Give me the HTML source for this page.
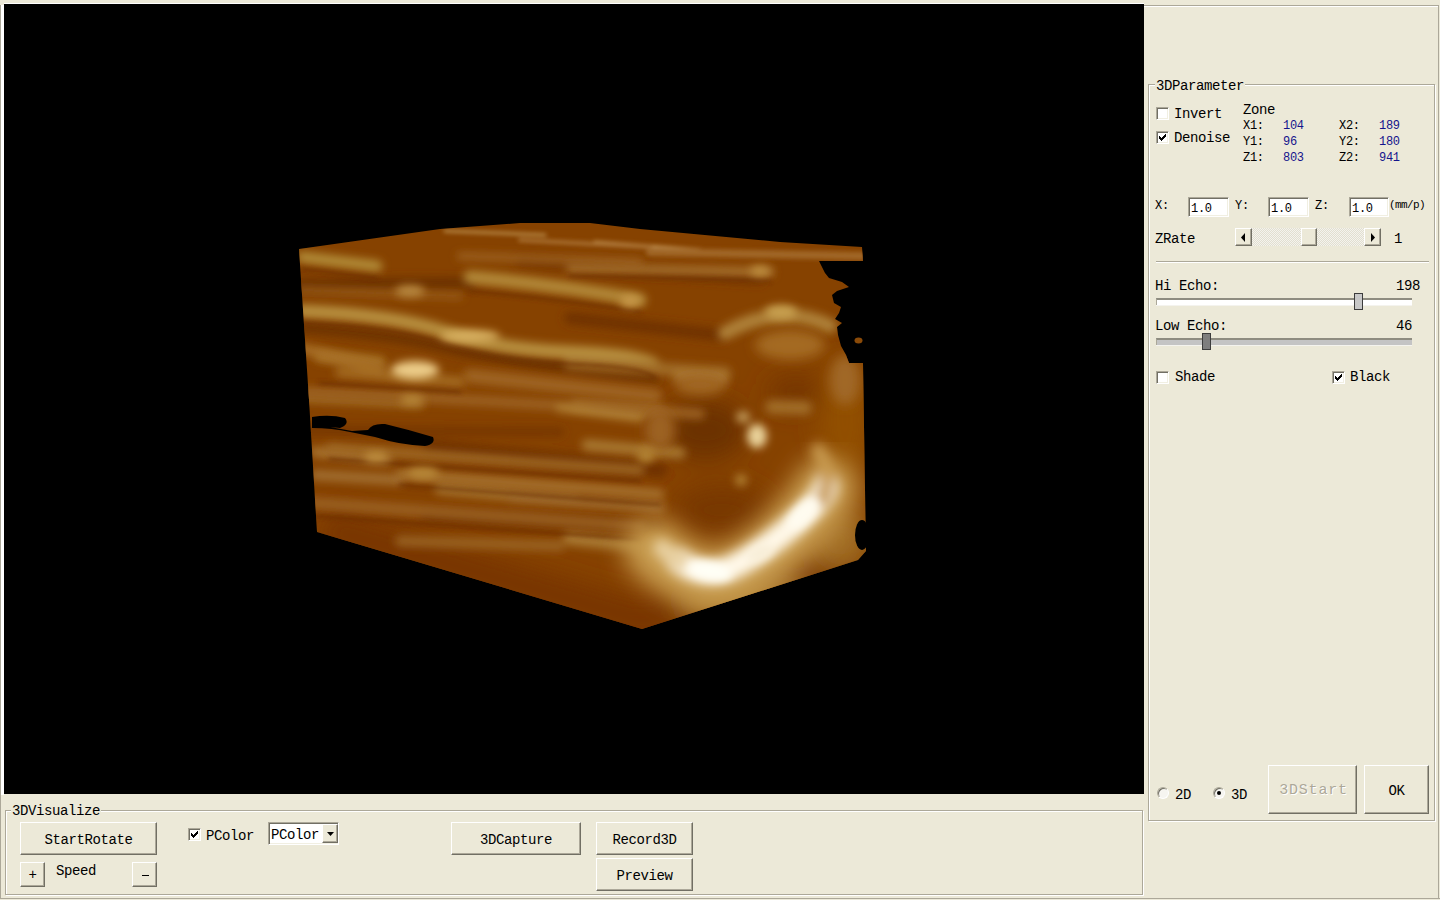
<!DOCTYPE html>
<html><head><meta charset="utf-8">
<style>
*{box-sizing:border-box;margin:0;padding:0}
html,body{width:1440px;height:900px;overflow:hidden;background:#ECE9D8}
body{position:relative;font-family:"Liberation Mono",monospace;color:#000}
.a{position:absolute}
.t{position:absolute;font-size:14px;letter-spacing:-0.4px;line-height:14px;white-space:pre}
.s{position:absolute;font-size:12px;letter-spacing:-0.3px;line-height:12px;white-space:pre}
.grp{position:absolute;border:1px solid #ACA899;box-shadow:inset 1px 1px 0 #fff,1px 1px 0 #fff}
.lbl{position:absolute;background:#ECE9D8;padding:0 1px}
.btn{position:absolute;background:#ECE9D8;border-top:1px solid #fff;border-left:1px solid #fff;border-right:1px solid #716F64;border-bottom:1px solid #716F64;box-shadow:inset -1px -1px 0 #ACA899}
.btn span{position:absolute;left:0;right:0;text-align:center;font-size:14px;letter-spacing:-0.4px;line-height:14px;white-space:pre}
.chk{position:absolute;width:13px;height:13px;background:#fff;border-top:1px solid #ACA899;border-left:1px solid #ACA899;border-right:1px solid #fff;border-bottom:1px solid #fff;box-shadow:inset 1px 1px 0 #716F64,inset -1px -1px 0 #F1EFE2}
.edit{position:absolute;background:#fff;border-top:1px solid #ACA899;border-left:1px solid #ACA899;border-right:1px solid #fff;border-bottom:1px solid #fff;box-shadow:inset 1px 1px 0 #716F64,inset -1px -1px 0 #F1EFE2}
.blue{color:#14148C}
</style></head><body>
<!-- outer frame left -->
<div class="a" style="left:0;top:5px;width:1px;height:893px;background:#ACA899"></div>
<div class="a" style="left:1px;top:5px;width:3px;height:790px;background:#fff"></div>
<div class="a" style="left:4px;top:3px;width:1140px;height:1px;background:#fff"></div>
<!-- viewport -->
<div class="a" id="vp" style="left:4px;top:4px;width:1140px;height:790px;background:#000;overflow:hidden">
<svg width="1140" height="790" viewBox="4 4 1140 790">
<defs>
<clipPath id="cp"><polygon points="299,249 440,229 520,223 590,223 640,229 780,242 862,247 863,261 819,261 825,273 829,278 842,282 849,287 837,291 832,295 834,303 841,307 839,313 835,319 842,323 837,327 838,335 841,346 846,355 849,363 863,363 866,551 858,560 642,629 317,532 309,400"/></clipPath>
<filter id="b2" x="-50%" y="-50%" width="200%" height="200%"><feGaussianBlur stdDeviation="2"/></filter>
<filter id="b4" x="-50%" y="-50%" width="200%" height="200%"><feGaussianBlur stdDeviation="4"/></filter>
<filter id="b6" x="-50%" y="-50%" width="200%" height="200%"><feGaussianBlur stdDeviation="6"/></filter>
<filter id="b12" x="-50%" y="-50%" width="200%" height="200%"><feGaussianBlur stdDeviation="12"/></filter>
</defs>
<g clip-path="url(#cp)">
<rect x="290" y="215" width="590" height="420" fill="#864200"/>
<!-- broad tonal regions -->
<g filter="url(#b12)">
<path d="M317,545 L642,640 L860,570 L860,540 L642,600 L330,510Z" fill="#783600"/>
<ellipse cx="845" cy="420" rx="25" ry="60" fill="#925000"/>
<ellipse cx="705" cy="430" rx="42" ry="30" fill="#6C3000"/>
<ellipse cx="722" cy="510" rx="48" ry="26" fill="#783800"/>
<ellipse cx="795" cy="392" rx="28" ry="16" fill="#743600"/>
<ellipse cx="750" cy="600" rx="70" ry="22" fill="#A87428"/>
<ellipse cx="840" cy="540" rx="30" ry="30" fill="#A06C20"/>
</g>
<!-- dark bands -->
<g filter="url(#b4)" fill="none" stroke-linecap="round">
<path d="M300,285 L470,283" stroke="#6C3000" stroke-width="12"/>
<path d="M300,328 Q400,336 445,348 T655,378" stroke="#6A3000" stroke-width="9"/>
<path d="M430,447 L660,470" stroke="#703200" stroke-width="15"/>
<path d="M425,515 L660,527" stroke="#6E3200" stroke-width="9"/>
<path d="M300,430 L560,432" stroke="#743400" stroke-width="8"/>
<path d="M570,318 L720,335" stroke="#703200" stroke-width="12"/>
<path d="M520,262 L760,280" stroke="#743600" stroke-width="8"/>
</g>
<!-- top thin streaks -->
<g filter="url(#b2)" fill="none" stroke-linecap="round">
<path d="M445,231 L545,235" stroke="#B88A48" stroke-width="3"/>
<path d="M595,242 L700,250" stroke="#C09050" stroke-width="3"/>
<path d="M520,240 L650,247" stroke="#A87030" stroke-width="4"/>
<path d="M650,252 L862,256" stroke="#A06628" stroke-width="8"/>
</g>
<!-- light streaks -->
<g filter="url(#b4)" fill="none" stroke-linecap="round">
<path d="M302,257 L377,266" stroke="#B28C38" stroke-width="11"/>
<path d="M470,277 Q560,285 640,300" stroke="#B28838" stroke-width="13"/>
<path d="M570,268 L770,272" stroke="#A87430" stroke-width="8"/>
<path d="M302,311 Q395,315 445,332 T570,352 T655,366" stroke="#B89040" stroke-width="13"/>
<path d="M320,356 L380,362" stroke="#A87428" stroke-width="11"/>
<path d="M470,376 L655,396" stroke="#9E6420" stroke-width="14"/>
<path d="M303,398 L420,404" stroke="#A06C28" stroke-width="8"/>
<path d="M575,405 L660,412" stroke="#AA7830" stroke-width="8"/>
<path d="M315,452 L388,460" stroke="#A87430" stroke-width="10"/>
<path d="M315,475 L400,480" stroke="#A27030" stroke-width="10"/>
<path d="M440,488 L575,500" stroke="#A87830" stroke-width="12"/>
<path d="M587,445 L680,453" stroke="#A87830" stroke-width="11"/>
<path d="M512,497 L660,507" stroke="#A27030" stroke-width="10"/>
<path d="M570,538 L660,548" stroke="#A87830" stroke-width="14"/>
<path d="M725,333 Q781,302 830,326" stroke="#AE8038" stroke-width="14"/>
<path d="M570,363 L725,373" stroke="#A06C28" stroke-width="12"/>
<path d="M400,541 L560,546" stroke="#9A6420" stroke-width="10"/>
<path d="M680,376 L722,378" stroke="#A87430" stroke-width="14"/>
<path d="M772,407 L805,408" stroke="#A06C28" stroke-width="14"/>
</g>
<g filter="url(#b4)" fill="none" stroke-linecap="round">
<path d="M300,348 L380,368" stroke="#A87028" stroke-width="10"/>
<path d="M340,372 L460,382" stroke="#A46C24" stroke-width="10"/>
<path d="M300,392 Q450,398 700,414" stroke="#9C6220" stroke-width="10"/>
<path d="M560,408 L640,418" stroke="#B08034" stroke-width="8"/>
<path d="M330,448 L640,470" stroke="#A06A26" stroke-width="9"/>
<path d="M400,474 L660,494" stroke="#A87430" stroke-width="9"/>
<path d="M300,502 L640,526" stroke="#9A6020" stroke-width="11"/>
<path d="M300,290 L460,296" stroke="#9A5E1C" stroke-width="6"/>
<path d="M460,256 L640,262" stroke="#A06828" stroke-width="6"/>
</g>
<g filter="url(#b6)">
<ellipse cx="790" cy="345" rx="35" ry="15" fill="#A46A20"/>
<ellipse cx="700" cy="385" rx="25" ry="10" fill="#A06620"/>
<ellipse cx="845" cy="380" rx="15" ry="25" fill="#A06828"/>
<ellipse cx="660" cy="430" rx="15" ry="20" fill="#9C6220"/>
</g>
<g filter="url(#b2)" fill="none" stroke="#6A2E00" stroke-width="3" stroke-linecap="round" opacity="0.8">
<path d="M302,323 Q395,327 445,344 T570,364 T655,378"/>
<path d="M470,291 Q560,299 640,312"/>
<path d="M302,269 L377,278"/>
<path d="M330,459 L640,481"/>
<path d="M400,485 L660,505"/>
<path d="M300,515 L640,539"/>
<path d="M320,383 L460,392"/>
<path d="M570,276 L770,281"/>
</g>
<!-- bright blobs -->
<g filter="url(#b4)">
<ellipse cx="410" cy="291" rx="15" ry="6" fill="#B88840"/>
<ellipse cx="630" cy="301" rx="10" ry="6" fill="#C89848"/>
<ellipse cx="760" cy="271" rx="10" ry="5" fill="#C09040"/>
<ellipse cx="470" cy="336" rx="30" ry="6" fill="#D8B060"/>
<ellipse cx="415" cy="370" rx="24" ry="9" fill="#ECCC88"/>
<ellipse cx="412" cy="400" rx="12" ry="5" fill="#B88838"/>
<ellipse cx="376" cy="457" rx="12" ry="5" fill="#C09040"/>
<ellipse cx="423" cy="473" rx="16" ry="6" fill="#B88838"/>
<ellipse cx="781" cy="312" rx="16" ry="7" fill="#C8A050"/>
<ellipse cx="757" cy="436" rx="10" ry="12" fill="#E8D098"/>
<ellipse cx="743" cy="417" rx="7" ry="6" fill="#C09858"/>
<ellipse cx="646" cy="455" rx="9" ry="8" fill="#B08030"/>
<ellipse cx="741" cy="480" rx="6" ry="6" fill="#B08030"/>
</g>
<!-- crescent -->
<g filter="url(#b12)" fill="none" stroke-linecap="round">
<path d="M655,550 C680,574 712,587 740,572 S792,534 812,509 S826,490 826,488" stroke="#C89C50" stroke-width="62"/>
</g>
<g filter="url(#b6)" fill="none" stroke-linecap="round">
<path d="M678,560 C690,570 712,578 735,566 S790,530 810,509 S822,494 826,486" stroke="#FFF8E8" stroke-width="25"/>
<path d="M662,548 Q670,556 680,561" stroke="#E8D0A0" stroke-width="18"/>
<path d="M822,500 Q834,475 818,450" stroke="#C89A50" stroke-width="14"/>
</g>
<g filter="url(#b4)">
<ellipse cx="710" cy="571" rx="22" ry="9" fill="#FFFFF6" transform="rotate(10 710 571)"/>
<ellipse cx="803" cy="514" rx="20" ry="9" fill="#FFFCF0" transform="rotate(-45 803 514)"/>
<ellipse cx="760" cy="553" rx="14" ry="7" fill="#F8EED8" transform="rotate(-25 760 553)"/>
</g>
</g>
<g fill="#000">
<path d="M312,417 Q330,414 345,418 Q350,424 340,428 L330,427 L352,431 L368,430 Q372,423 385,424 Q410,430 433,437 Q436,444 425,446 Q400,445 375,437 L350,432 Q332,428 312,428Z"/>
<ellipse cx="858.5" cy="340.5" rx="4" ry="3" fill="#8A4A08"/>
<ellipse cx="862" cy="535" rx="7" ry="15"/>
</g>
</svg>
</div>

<!-- right panel frame -->
<div class="a" style="left:1144px;top:5px;width:295px;height:1px;background:#ACA899"></div>
<div class="a" style="left:1144px;top:6px;width:294px;height:1px;background:#fff"></div>
<div class="a" style="left:1438px;top:5px;width:1px;height:894px;background:#ACA899"></div>
<div class="a" style="left:0;top:898px;width:1440px;height:1px;background:#ACA899"></div>

<!-- 3DParameter group -->
<div class="grp" style="left:1148px;top:84px;width:287px;height:737px"></div>
<div class="t lbl" style="left:1155px;top:79px">3DParameter</div>


<!-- Invert / Denoise -->
<div class="chk" style="left:1156px;top:107px"></div>
<div class="t" style="left:1174px;top:107px">Invert</div>
<div class="chk" style="left:1156px;top:131px"><svg class="a" style="left:2px;top:2px" width="7" height="7" viewBox="0 0 7 7" shape-rendering="crispEdges"><path d="M6,0h1v1h-1zM5,1h2v1h-2zM0,2h1v1h-1zM4,2h3v1h-3zM0,3h2v1h-2zM3,3h3v1h-3zM0,4h5v1h-5zM1,5h3v1h-3zM2,6h1v1h-1z" fill="#000"/></svg></div>
<div class="t" style="left:1174px;top:131px">Denoise</div>
<div class="t" style="left:1243px;top:103px">Zone</div>
<div class="s" style="left:1243px;top:120px">X1:</div>
<div class="s" style="left:1243px;top:136px">Y1:</div>
<div class="s" style="left:1243px;top:152px">Z1:</div>
<div class="s blue" style="left:1283px;top:120px">104</div>
<div class="s blue" style="left:1283px;top:136px">96</div>
<div class="s blue" style="left:1283px;top:152px">803</div>
<div class="s" style="left:1339px;top:120px">X2:</div>
<div class="s" style="left:1339px;top:136px">Y2:</div>
<div class="s" style="left:1339px;top:152px">Z2:</div>
<div class="s blue" style="left:1379px;top:120px">189</div>
<div class="s blue" style="left:1379px;top:136px">180</div>
<div class="s blue" style="left:1379px;top:152px">941</div>

<!-- X Y Z edits -->
<div class="s" style="left:1155px;top:200px">X:</div>
<div class="edit" style="left:1188px;top:197px;width:41px;height:20px"></div>
<div class="s" style="left:1191px;top:203px">1.0</div>
<div class="s" style="left:1235px;top:200px">Y:</div>
<div class="edit" style="left:1268px;top:197px;width:41px;height:20px"></div>
<div class="s" style="left:1271px;top:203px">1.0</div>
<div class="s" style="left:1315px;top:200px">Z:</div>
<div class="edit" style="left:1349px;top:197px;width:40px;height:20px"></div>
<div class="s" style="left:1352px;top:203px">1.0</div>
<div class="s" style="left:1389px;top:199px;font-size:11px;letter-spacing:-0.6px">(mm/p)</div>

<!-- ZRate -->
<div class="t" style="left:1155px;top:232px">ZRate</div>
<div class="a" style="left:1235px;top:228px;width:146px;height:18px;background:repeating-conic-gradient(#F4F3EE 0 25%,#E2DFD0 0 50%) 0 0/2px 2px"></div>
<div class="btn" style="left:1235px;top:228px;width:17px;height:18px"><svg class="a" style="left:5px;top:4px" width="6" height="9"><path d="M4 0 L0 4.5 L4 9Z" fill="#000"/></svg></div>
<div class="btn" style="left:1301px;top:228px;width:16px;height:18px"></div>
<div class="btn" style="left:1364px;top:228px;width:17px;height:18px"><svg class="a" style="left:6px;top:4px" width="6" height="9"><path d="M0 0 L4 4.5 L0 9Z" fill="#000"/></svg></div>
<div class="t" style="left:1394px;top:232px">1</div>

<!-- separator -->
<div class="a" style="left:1156px;top:261px;width:273px;height:1px;background:#ACA899"></div>
<div class="a" style="left:1156px;top:262px;width:273px;height:1px;background:#fff"></div>

<!-- Hi Echo -->
<div class="t" style="left:1155px;top:279px">Hi Echo:</div>
<div class="t" style="left:1396px;top:279px">198</div>
<div class="a" style="left:1156px;top:297.5px;width:256px;height:7.5px;background:#fff;border-top:2px solid #8E8C80;border-left:1px solid #ACA899;box-shadow:0 1px 0 #F4F3EE"></div>
<div class="a" style="left:1354px;top:293px;width:9px;height:17px;background:#C8C8C8;border:1px solid #3C3C3C"></div>
<!-- Low Echo -->
<div class="t" style="left:1155px;top:319px">Low Echo:</div>
<div class="t" style="left:1396px;top:319px">46</div>
<div class="a" style="left:1156px;top:337.5px;width:256px;height:7.5px;background:#C4C4C4;border-top:2px solid #8E8C80;border-left:1px solid #ACA899;box-shadow:0 1px 0 #F4F3EE"></div>
<div class="a" style="left:1202px;top:333px;width:9px;height:17px;background:#7E7E7E;border:1px solid #3C3C3C"></div>

<!-- Shade / Black -->
<div class="chk" style="left:1156px;top:371px"></div>
<div class="t" style="left:1175px;top:370px">Shade</div>
<div class="chk" style="left:1332px;top:371px"><svg class="a" style="left:2px;top:2px" width="7" height="7" viewBox="0 0 7 7" shape-rendering="crispEdges"><path d="M6,0h1v1h-1zM5,1h2v1h-2zM0,2h1v1h-1zM4,2h3v1h-3zM0,3h2v1h-2zM3,3h3v1h-3zM0,4h5v1h-5zM1,5h3v1h-3zM2,6h1v1h-1z" fill="#000"/></svg></div>
<div class="t" style="left:1350px;top:370px">Black</div>

<!-- radios -->
<div class="a" style="left:1157px;top:787px;width:12px;height:12px;border-radius:50%;background:#F6F5F0;border:1px solid;border-color:#ACA899 #fff #fff #ACA899;box-shadow:inset 1px 1px 0 #716F64"></div>
<div class="t" style="left:1175px;top:787.5px">2D</div>
<div class="a" style="left:1213px;top:787px;width:12px;height:12px;border-radius:50%;background:#F6F5F0;border:1px solid;border-color:#ACA899 #fff #fff #ACA899;box-shadow:inset 1px 1px 0 #716F64"><div class="a" style="left:3px;top:3px;width:4px;height:4px;border-radius:50%;background:#000"></div></div>
<div class="t" style="left:1231px;top:787.5px">3D</div>

<div class="btn" style="left:1268px;top:765px;width:89px;height:49px"><span style="top:18px;left:2px;color:#ACA899;text-shadow:1px 1px 0 #fff;font-size:15px;letter-spacing:0.8px">3DStart</span></div>
<div class="btn" style="left:1364px;top:765px;width:65px;height:49px"><span style="top:18px">OK</span></div>

<!-- bottom panel -->
<div class="grp" style="left:5px;top:810px;width:1138px;height:85px"></div>
<div class="t lbl" style="left:11px;top:804px">3DVisualize</div>
<div class="btn" style="left:20px;top:822px;width:137px;height:33px"><span style="top:10px">StartRotate</span></div>
<div class="btn" style="left:20px;top:862px;width:25px;height:25px"><span style="top:5px">+</span></div>
<div class="t" style="left:56px;top:864px">Speed</div>
<div class="btn" style="left:132px;top:862px;width:25px;height:25px"><div class="a" style="left:9px;top:12px;width:7px;height:1px;background:#000"></div></div>
<div class="chk" style="left:188px;top:828px"><svg class="a" style="left:2px;top:2px" width="7" height="7" viewBox="0 0 7 7" shape-rendering="crispEdges"><path d="M6,0h1v1h-1zM5,1h2v1h-2zM0,2h1v1h-1zM4,2h3v1h-3zM0,3h2v1h-2zM3,3h3v1h-3zM0,4h5v1h-5zM1,5h3v1h-3zM2,6h1v1h-1z" fill="#000"/></svg></div>
<div class="t" style="left:206px;top:829px">PColor</div>
<div class="edit" style="left:268px;top:822px;width:71px;height:23px"></div>
<div class="t" style="left:271px;top:828px">PColor</div>
<div class="btn" style="left:322px;top:824px;width:16px;height:19px"><svg class="a" style="left:4px;top:7px" width="7" height="4"><path d="M0 0 L7 0 L3.5 4Z" fill="#000"/></svg></div>
<div class="btn" style="left:451px;top:822px;width:130px;height:33px"><span style="top:10px">3DCapture</span></div>
<div class="btn" style="left:596px;top:822px;width:97px;height:33px"><span style="top:10px">Record3D</span></div>
<div class="btn" style="left:596px;top:858px;width:97px;height:33px"><span style="top:10px">Preview</span></div>

</body></html>
